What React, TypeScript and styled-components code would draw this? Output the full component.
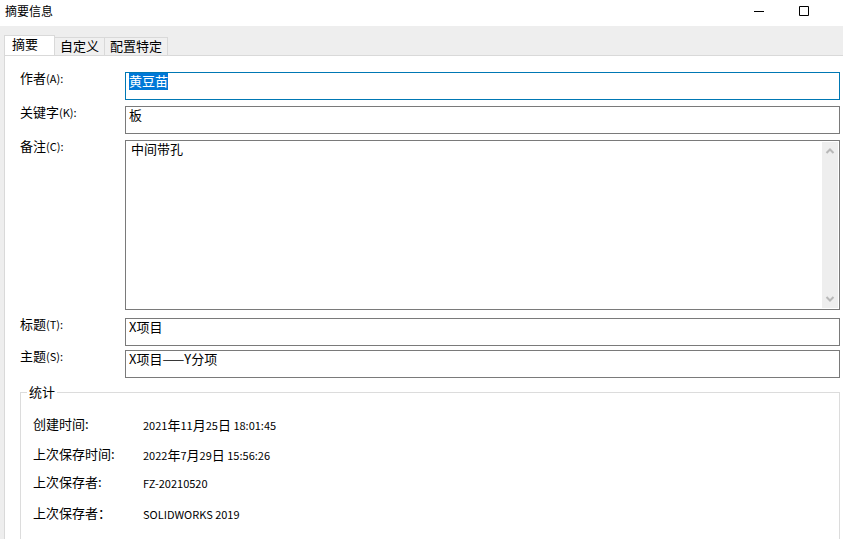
import React, { useEffect, useRef } from 'react';
import styled, { createGlobalStyle } from 'styled-components';

const GlobalStyle = createGlobalStyle`
  * { box-sizing: border-box; }
  html, body, #root { height: 100%; }
  body {
    margin: 0;
    overflow: hidden;
    background: #fff;
    color: #000;
    font-family: "Noto Sans CJK SC", sans-serif;
    font-size: 13px;
    line-height: 14px;
  }
  button, input, textarea { font: inherit; color: inherit; }
  ::selection { background: #0078d7; color: #fff; }
`;

const Dialog = styled.div`
  display: flex;
  flex-direction: column;
  min-height: 100%;
  background: #eee;
`;

const TitleBar = styled.header`
  display: flex;
  align-items: center;
  justify-content: space-between;
  height: 26px;
  padding: 0 17px 5px 5px;
  background: #fff;
`;

const Title = styled.h1`
  margin: 0;
  font-size: 12px;
  font-weight: 400;
`;

const WindowButtons = styled.div`
  display: flex;
`;

const WindowButton = styled.button`
  display: grid;
  place-items: center;
  width: 45px;
  height: 20px;
  padding: 0;
  border: 0;
  background: transparent;
`;

const TabList = styled.div`
  display: flex;
  align-items: flex-end;
  padding: 9px 4px 0;
`;

const Tab = styled.button<{ $active?: boolean }>`
  height: ${p => (p.$active ? 21 : 18)}px;
  margin-bottom: ${p => (p.$active ? -1 : 0)}px;
  padding: ${p => (p.$active ? '0 16px 5px 7px' : '0 5px 2px')};
  border: 1px solid #d9d9d9;
  border-bottom: 0;
  border-left-width: ${p => (p.$active ? 1 : 0)}px;
  background: ${p => (p.$active ? '#fff' : '#f0f0f0')};
  line-height: 16px;
`;

const Panel = styled.main`
  display: flex;
  flex: 1;
  flex-direction: column;
  margin-left: 4px;
  padding: 16px 3px 0 15px;
  border: solid #d9d9d9;
  border-width: 1px 0 0 1px;
  background: #fff;
`;

const Fields = styled.form`
  display: flex;
  flex-direction: column;
  gap: 6px;
`;

const FieldGroup = styled.div`
  display: flex;
  flex-direction: column;
  gap: 4px;
  padding-top: 2px;
`;

const Field = styled.div`
  display: grid;
  grid-template-columns: 105px 1fr;
  align-items: start;
`;

const Label = styled.label`
  line-height: 12px;
`;

const Key = styled.span`
  font-size: 11px;
`;

const TextInput = styled.input`
  width: 100%;
  height: 28px;
  padding: 0 3px 12px;
  border: 1px solid #7a7a7a;
  border-radius: 0;
  outline: 0;
  background: #fff;
  font-family: "Liberation Sans Narrow", "Noto Sans CJK SC", sans-serif;
  &:focus { border-color: #0078b4; }
`;

const NoteBox = styled.div`
  display: flex;
  height: 170px;
  padding: 1px;
  border: 1px solid #7a7a7a;
`;

const NoteText = styled.textarea`
  flex: 1;
  padding: 0 4px;
  border: 0;
  outline: 0;
  resize: none;
  overflow: hidden;
  background: transparent;
`;

const ScrollTrack = styled.div`
  display: flex;
  flex-direction: column;
  justify-content: space-between;
  width: 16px;
  background: #eee;
`;

const ScrollButton = styled.button`
  display: grid;
  place-items: center;
  height: 18px;
  padding: 0;
  border: 0;
  background: transparent;
`;

const Statistics = styled.fieldset`
  flex: 1;
  min-width: 0;
  margin: 7px 0 0;
  padding: 18px 12px 0;
  border: 1px solid #dcdcdc;
  border-bottom: 0;
`;

const Legend = styled.legend`
  margin-left: -6px;
  padding: 0 2px;
`;

const StatList = styled.dl`
  display: grid;
  grid-template-columns: 110px 1fr;
  grid-template-rows: 30px 28px 31px 24px;
  align-items: start;
  margin: 0;
`;

const Term = styled.dt`
  white-space: nowrap;
`;

const Detail = styled.dd`
  margin: 0;
  padding-top: 1px;
  font-size: 11px;
`;

const Unit = styled.span`
  font-size: 13px;
`;

const DateText = ({ parts, time }: { parts: [string, string, string]; time: string }) => (
  <time>
    {parts[0]}<Unit>年</Unit>{parts[1]}<Unit>月</Unit>{parts[2]}<Unit>日</Unit> {time}
  </time>
);

const Chevron = ({ up }: { up?: boolean }) => (
  <svg width="10" height="8" viewBox="0 0 10 8" fill="none" stroke="#b8b8b8" strokeWidth="2" aria-hidden="true">
    <path d={up ? 'M1.5 6 5 2.5 8.5 6' : 'M1.5 2 5 5.5 8.5 2'} />
  </svg>
);

const FieldLabel = ({ id, text, shortcut }: { id: string; text: string; shortcut: string }) => (
  <Label htmlFor={id}>
    {text}<Key>({shortcut}):</Key>
  </Label>
);

export default function App() {
  const author = useRef<HTMLInputElement>(null);

  useEffect(() => {
    author.current?.focus();
    author.current?.select();
  }, []);

  return (
    <>
      <GlobalStyle />
      <Dialog>
        <TitleBar>
          <Title>摘要信息</Title>
          <WindowButtons>
            <WindowButton aria-label="最小化">
              <svg width="10" height="10" aria-hidden="true"><path d="M0 5.5h10" stroke="#000" /></svg>
            </WindowButton>
            <WindowButton aria-label="最大化">
              <svg width="10" height="10" aria-hidden="true"><path d="M.5.5h9v9h-9z" fill="none" stroke="#000" /></svg>
            </WindowButton>
          </WindowButtons>
        </TitleBar>
        <TabList role="tablist">
          <Tab role="tab" aria-selected="true" $active>摘要</Tab>
          <Tab role="tab" aria-selected="false">自定义</Tab>
          <Tab role="tab" aria-selected="false">配置特定</Tab>
        </TabList>
        <Panel>
          <Fields>
            <Field>
              <FieldLabel id="author" text="作者" shortcut="A" />
              <TextInput id="author" ref={author} defaultValue="黄豆苗" />
            </Field>
            <Field>
              <FieldLabel id="keywords" text="关键字" shortcut="K" />
              <TextInput id="keywords" defaultValue="板" />
            </Field>
            <Field>
              <FieldLabel id="note" text="备注" shortcut="C" />
              <NoteBox>
                <NoteText id="note" defaultValue="中间带孔" />
                <ScrollTrack>
                  <ScrollButton type="button" aria-label="向上滚动"><Chevron up /></ScrollButton>
                  <ScrollButton type="button" aria-label="向下滚动"><Chevron /></ScrollButton>
                </ScrollTrack>
              </NoteBox>
            </Field>
            <FieldGroup>
              <Field>
                <FieldLabel id="title" text="标题" shortcut="T" />
                <TextInput id="title" defaultValue="X项目" />
              </Field>
              <Field>
                <FieldLabel id="subject" text="主题" shortcut="S" />
                <TextInput id="subject" defaultValue="X项目——Y分项" />
              </Field>
            </FieldGroup>
          </Fields>
          <Statistics>
            <Legend>统计</Legend>
            <StatList>
              <Term>创建时间:</Term>
              <Detail><DateText parts={['2021', '11', '25']} time="18:01:45" /></Detail>
              <Term>上次保存时间:</Term>
              <Detail><DateText parts={['2022', '7', '29']} time="15:56:26" /></Detail>
              <Term>上次保存者:</Term>
              <Detail>FZ-20210520</Detail>
              <Term>上次保存者：</Term>
              <Detail>SOLIDWORKS 2019</Detail>
            </StatList>
          </Statistics>
        </Panel>
      </Dialog>
    </>
  );
}
